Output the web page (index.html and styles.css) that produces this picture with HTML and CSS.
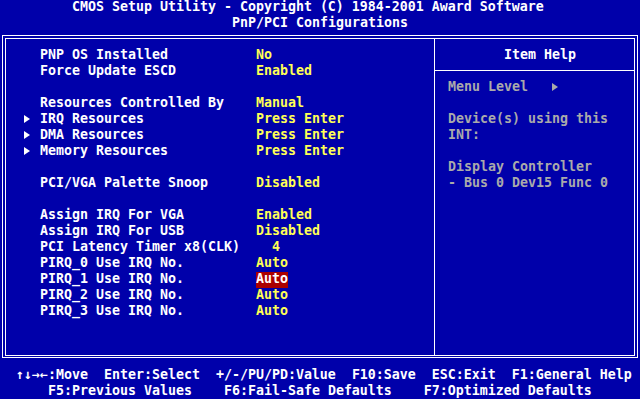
FILE: index.html
```html
<!DOCTYPE html>
<html lang="en">
<head>
    <meta charset="UTF-8">
    <meta name="viewport" content="width=device-width, initial-scale=1.0">
    <title>CMOS Setup Utility</title>
    <link rel="stylesheet" href="styles.css">
</head>
<body>
    <div id="screen">
        <div class="title">CMOS Setup Utility - Copyright (C) 1984-2001 Award Software</div>
        <div class="subtitle">PnP/PCI Configurations</div>

        <div id="frame">
            <div id="inner">
                <!-- 설정 항목 -->
                <div id="menu">
                    <div class="row"><span></span><span class="label">PNP OS Installed</span><span class="value">No</span></div>
                    <div class="row"><span></span><span class="label">Force Update ESCD</span><span class="value">Enabled</span></div>
                    <div class="row"></div>
                    <div class="row"><span></span><span class="label">Resources Controlled By</span><span class="value">Manual</span></div>
                    <div class="row"><span class="arrow"></span><span class="label">IRQ Resources</span><span class="value">Press Enter</span></div>
                    <div class="row"><span class="arrow"></span><span class="label">DMA Resources</span><span class="value">Press Enter</span></div>
                    <div class="row"><span class="arrow"></span><span class="label">Memory Resources</span><span class="value">Press Enter</span></div>
                    <div class="row"></div>
                    <div class="row"><span></span><span class="label">PCI/VGA Palette Snoop</span><span class="value">Disabled</span></div>
                    <div class="row"></div>
                    <div class="row"><span></span><span class="label">Assign IRQ For VGA</span><span class="value">Enabled</span></div>
                    <div class="row"><span></span><span class="label">Assign IRQ For USB</span><span class="value">Disabled</span></div>
                    <div class="row"><span></span><span class="label">PCI Latency Timer x8(CLK)</span><span class="value">  4</span></div>
                    <div class="row"><span></span><span class="label">PIRQ_0 Use IRQ No.</span><span class="value">Auto</span></div>
                    <div class="row"><span></span><span class="label">PIRQ_1 Use IRQ No.</span><span class="value selected">Auto</span></div>
                    <div class="row"><span></span><span class="label">PIRQ_2 Use IRQ No.</span><span class="value">Auto</span></div>
                    <div class="row"><span></span><span class="label">PIRQ_3 Use IRQ No.</span><span class="value">Auto</span></div>
                </div>

                <!-- 도움말 영역 -->
                <div id="help">
                    <div class="help-title">Item Help</div>
                    <div class="help-body">
                        <div class="line">Menu Level<span class="arrow help-arrow"></span></div>
                        <div class="line"></div>
                        <div class="line">Device(s) using this</div>
                        <div class="line">INT:</div>
                        <div class="line"></div>
                        <div class="line">Display Controller</div>
                        <div class="line">- Bus 0 Dev15 Func 0</div>
                    </div>
                </div>
            </div>
        </div>

        <div id="footer">
            <div class="keys keys-top">
                <span>↑↓→←:Move</span>
                <span>Enter:Select</span>
                <span>+/-/PU/PD:Value</span>
                <span>F10:Save</span>
                <span>ESC:Exit</span>
                <span>F1:General Help</span>
            </div>
            <div class="keys keys-bottom">
                <span>F5:Previous Values</span>
                <span>F6:Fail-Safe Defaults</span>
                <span>F7:Optimized Defaults</span>
            </div>
        </div>
    </div>
</body>
</html>
```

FILE: styles.css
```css
body {
    margin: 0;
    background-color: #0000aa;
    color: #ffffff;
    font-family: "DejaVu Sans Mono", "Liberation Mono", monospace;
    font-size: 13.29px;
    font-weight: bold;
    overflow: hidden;
}
#screen {
    width: 640px;
    height: 399px;
    overflow: hidden;
}
/* 한 줄 = 16px (텍스트 모드 한 칸) */
.title, .subtitle, .row, .line, .help-title, .keys {
    height: 16px;
    line-height: 13px;
    white-space: pre;
}
.title {
    padding-left: 72px;
}
.subtitle {
    padding-left: 232px;
}

#frame {
    margin: 3px 2px 0;
    border: 1px solid #ffffff;
    padding: 2px 2px 1px;
}
#inner {
    border: 1px solid #ffffff;
    height: 316px;
    display: grid;
    grid-template-columns: 428px 1fr;
}

#menu {
    padding-top: 9px;
}
.row {
    display: grid;
    grid-template-columns: 16px 216px auto;
    padding-left: 18px;
}
.value {
    color: #ffff55;
    justify-self: start;
}
.value.selected {
    background-color: #aa0000;
    color: #ffffff;
    height: 16px;
}
.arrow {
    width: 0;
    height: 0;
    margin-top: 3px;
    border-left: 6px solid #ffffff;
    border-top: 4px solid transparent;
    border-bottom: 4px solid transparent;
    align-self: start;
}

#help {
    border-left: 1px solid #ffffff;
    color: #aaaaaa;
}
.help-title {
    color: #ffffff;
    padding: 9px 0 6px 69px;
    border-bottom: 1px solid #ffffff;
}
.help-body {
    padding: 9px 0 0 13px;
}
.line {
    display: flex;
}
.help-arrow {
    margin-left: 24px;
    border-left-color: #aaaaaa;
}

#footer {
    padding-top: 10px;
}
.keys {
    display: flex;
}
.keys-top {
    gap: 16px;
    padding-left: 16px;
}
.keys-bottom {
    gap: 32px;
    padding-left: 48px;
}
```
